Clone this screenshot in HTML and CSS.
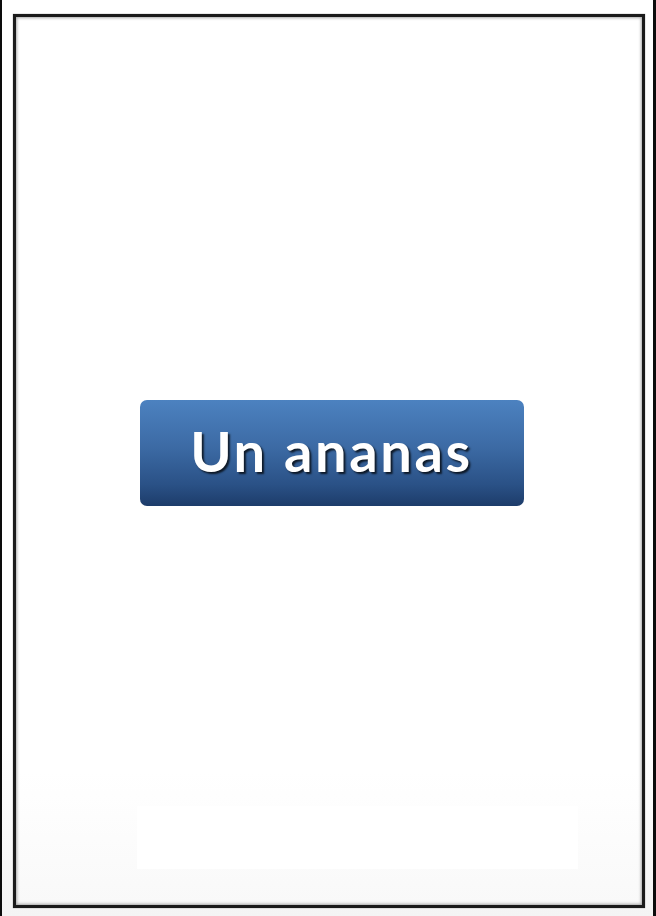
FILE: index.html
```html
<!DOCTYPE html>
<html lang="fr">
<head>
<meta charset="utf-8">
<title>Un ananas</title>
<link rel="stylesheet" href="styles.css">
</head>
<body>
<div class="page">
  <div class="frame">
    <button class="btn" type="button">Un ananas</button>
    <div class="footer-area"></div>
  </div>
</div>
</body>
</html>
```

FILE: styles.css
```css
html, body {
  margin: 0;
  padding: 0;
}
body {
  width: 656px;
  height: 916px;
  overflow: hidden;
  background: #f4f4f4;
}
.page {
  box-sizing: border-box;
  width: 656px;
  height: 916px;
  border-left: 2px solid #0c0c0c;
  border-right: 3px solid #0c0c0c;
  padding: 14px 8px 8px 11px;
  background: linear-gradient(to bottom, #ffffff 0%, #ffffff 80%, #f4f4f4 100%);
}
.frame {
  box-sizing: border-box;
  width: 632px;
  height: 894px;
  border: 3px solid #1b1b1b;
  box-shadow: inset 0 0 3px 1px rgba(0, 0, 0, 0.35), 0 0 1px rgba(0, 0, 0, 0.5);
  background: linear-gradient(to bottom, #ffffff 0%, #ffffff 85%, #f9f9f9 100%);
  display: flex;
  flex-direction: column;
  align-items: flex-start;
}
.btn {
  margin: 383px 0 0 124px;
  width: 384px;
  height: 106px;
  border: none;
  border-radius: 7px;
  padding: 0 0 4px 0;
  background: linear-gradient(to bottom, #4c82c0 0%, #3c6aa4 45%, #2a5186 80%, #1d3c6a 100%);
  color: #ffffff;
  font-family: Lato, "Open Sans", sans-serif;
  font-weight: 700;
  font-size: 56px;
  letter-spacing: 2.6px;
  text-indent: -1px;
  line-height: 1;
  text-shadow: 2px 2px 2px rgba(0, 0, 0, 0.75);
  cursor: pointer;
}
.footer-area {
  margin: 300px 0 0 121px;
  width: 441px;
  height: 63px;
  background: #ffffff;
}
```
